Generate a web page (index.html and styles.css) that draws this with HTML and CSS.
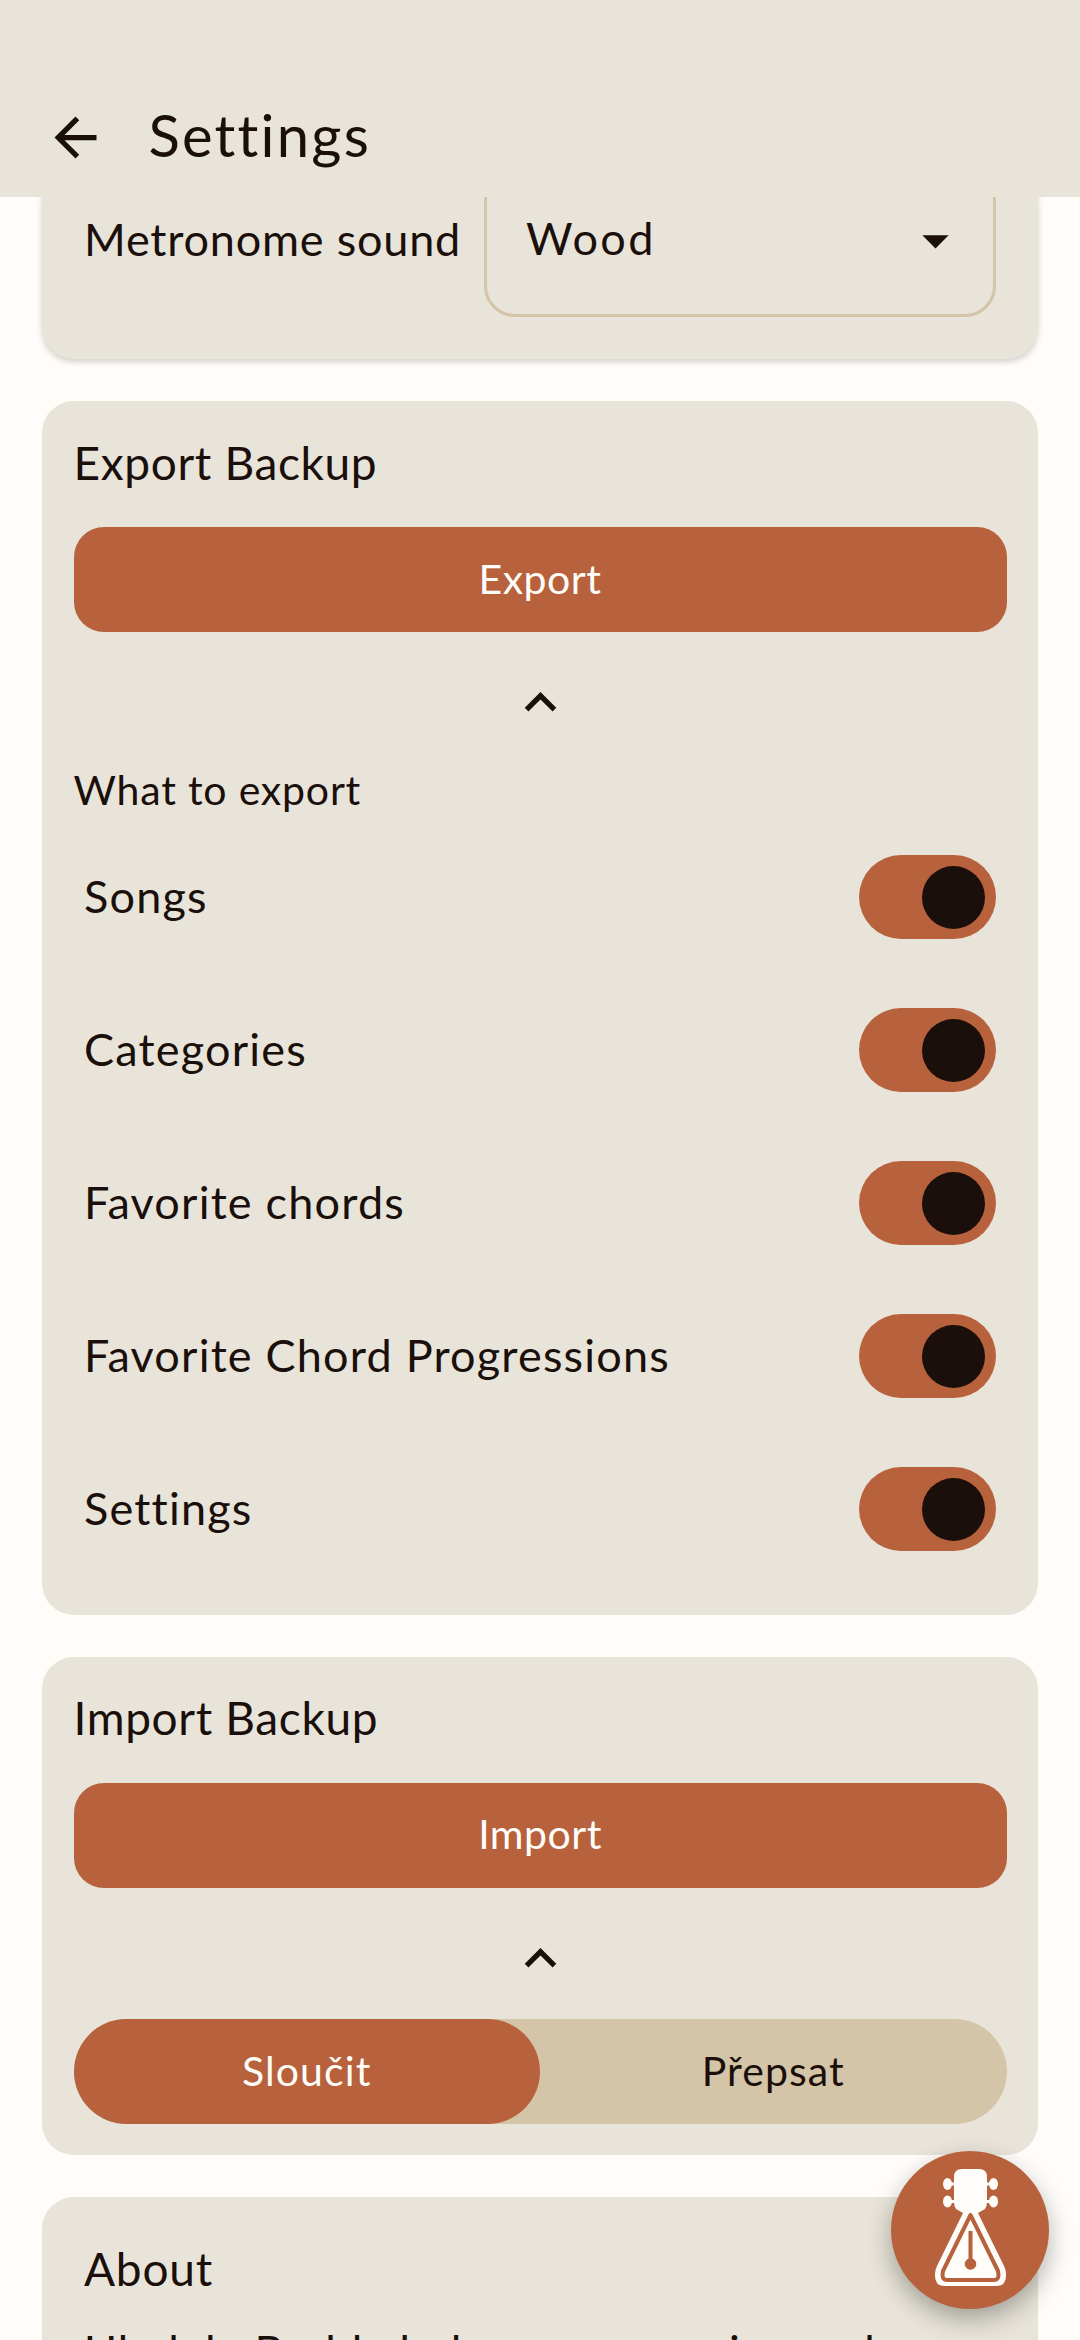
FILE: index.html
```html
<!DOCTYPE html>
<html lang="en">
<head>
<meta charset="utf-8">
<title>Settings</title>
<link rel="stylesheet" href="styles.css">
</head>
<body>
<div class="app">
  <header class="topbar">
    <svg class="back" viewBox="0 0 24 24"><path d="M20 11H7.83l5.59-5.59L12 4l-8 8 8 8 1.41-1.41L7.83 13H20v-2z"/></svg>
    <h1 class="page-title">Settings</h1>
  </header>
  <main class="scroller">
    <section class="card card-sound">
      <span class="label label-sound">Metronome sound</span>
      <div class="select">
        <span class="label select-value">Wood</span>
        <svg class="drop" viewBox="0 0 24 24"><path d="M7 10l5 5 5-5z"/></svg>
      </div>
    </section>

    <section class="card card-export">
      <h2 class="card-title">Export Backup</h2>
      <div class="btn">Export</div>
      <svg class="chevron" viewBox="0 0 24 24"><path d="M12 8l-6 6 1.41 1.41L12 10.83l4.59 4.58L18 14z"/></svg>
      <p class="subtitle">What to export</p>
      <div class="row"><span class="label">Songs</span><span class="switch"><i class="thumb"></i></span></div>
      <div class="row"><span class="label">Categories</span><span class="switch"><i class="thumb"></i></span></div>
      <div class="row"><span class="label">Favorite chords</span><span class="switch"><i class="thumb"></i></span></div>
      <div class="row"><span class="label">Favorite Chord Progressions</span><span class="switch"><i class="thumb"></i></span></div>
      <div class="row"><span class="label">Settings</span><span class="switch"><i class="thumb"></i></span></div>
    </section>

    <section class="card">
      <h2 class="card-title">Import Backup</h2>
      <div class="btn">Import</div>
      <svg class="chevron" viewBox="0 0 24 24"><path d="M12 8l-6 6 1.41 1.41L12 10.83l4.59 4.58L18 14z"/></svg>
      <div class="segmented">
        <div class="seg seg-on">Sloučit</div>
        <div class="seg">Přepsat</div>
      </div>
    </section>

    <section class="card card-about">
      <h2 class="about-title">About</h2>
      <p class="about-text">Ukulele Buddy helps you organize and learn songs.</p>
    </section>
  </main>
  <div class="fab">
    <svg class="fab-icon" viewBox="891 2151 158 158">
      <path class="w" d="M962 2169H979Q987 2169 987 2177V2202Q987 2206 985 2209L978 2213L1004 2266Q1006 2270 1006 2274V2276Q1006 2286 996 2286H945Q935 2286 935 2276V2274Q935 2270 937 2266L963 2213L956 2209Q954 2206 954 2202V2177Q954 2169 962 2169Z"/>
      <ellipse class="w" cx="947.5" cy="2184" rx="4.5" ry="6"/>
      <ellipse class="w" cx="947.5" cy="2201.5" rx="4.5" ry="6"/>
      <ellipse class="w" cx="993.5" cy="2184" rx="4.5" ry="6"/>
      <ellipse class="w" cx="993.5" cy="2201.5" rx="4.5" ry="6"/>
      <rect class="w" x="948" y="2182.5" width="45" height="3"/>
      <rect class="w" x="948" y="2200" width="45" height="3"/>
      <path class="tri" d="M970.5 2215L998 2271Q1000 2280 994 2280H947Q941 2280 943 2271Z"/>
      <rect class="b" x="968.5" y="2231" width="4" height="32"/>
      <circle class="b" cx="970.5" cy="2264" r="5.8"/>
    </svg>
  </div>
</div>
</body>
</html>
```
FILE: styles.css
```css
* { box-sizing: border-box; }
html, body { margin: 0; padding: 0; }
body {
  width: 1080px;
  height: 2340px;
  overflow: hidden;
  background: #FEFDF9;
  color: #1A0F0A;
  font-family: Lato, "Noto Sans", sans-serif;
}
.app { position: relative; display: flex; flex-direction: column; height: 2340px; overflow: hidden; }
.topbar {
  flex: none;
  height: 197px;
  background: #E8E4D9;
  display: flex;
  align-items: center;
  padding: 78px 0 0 43.5px;
  gap: 42px;
  position: relative;
  z-index: 2;
}
.back { width: 63px; height: 63px; fill: #1A0F0A; flex: none; }
.page-title { margin: 0; padding-bottom: 6px; font-size: 58px; font-weight: 400; letter-spacing: 2.2px; line-height: 70px; }
.scroller { flex: 1; min-height: 0; overflow: hidden; padding: 0 42px; display: flex; flex-direction: column; gap: 42px; }
.card { flex: none; background: #E8E4D9; border-radius: 32px; padding: 31.5px; display: flex; flex-direction: column; }
.card-sound {
  margin-top: -27px;
  padding: 0 42px 42px 42px;
  flex-direction: row;
  align-items: center;
  justify-content: space-between;
  box-shadow: 0 3px 6px rgba(0,0,0,.18);
}
.label { font-size: 45px; letter-spacing: 1.2px; line-height: 60px; padding-bottom: 3px; white-space: nowrap; }
.label-sound { letter-spacing: .8px; margin-top: -7px; }
.select-value { padding-bottom: 6px; letter-spacing: 2.4px; }
.select {
  width: 512px;
  height: 147px;
  border: 3px solid #D4C4A8;
  border-radius: 31px;
  display: flex;
  align-items: center;
  justify-content: space-between;
  padding: 0 26px 6px 39px;
}
.drop { width: 63px; height: 63px; fill: #1A0F0A; flex: none; }
.card-title { margin: 0 0 35.5px; font-size: 46px; font-weight: 400; letter-spacing: .65px; line-height: 59px; }
.btn {
  height: 105px;
  padding-bottom: 3px;
  background: #B8613D;
  color: #FEFDF9;
  border-radius: 30px;
  display: flex;
  align-items: center;
  justify-content: center;
  font-size: 41px;
  letter-spacing: .5px;
}
.chevron { display: block; width: 63px; height: 63px; fill: #1A0F0A; align-self: center; margin: 39px 0 0; flex: none; }
.subtitle { margin: 28px 0 3.5px; font-size: 41px; letter-spacing: .8px; line-height: 55px; }
.row { height: 153px; padding: 0 10.5px; display: flex; align-items: center; justify-content: space-between; }
.card-export { padding-bottom: 29px; }
.switch { width: 137px; height: 84px; border-radius: 42px; background: #B8613D; display: flex; align-items: center; justify-content: flex-end; padding-right: 11px; flex: none; }
.thumb { display: block; width: 63px; height: 63px; border-radius: 50%; background: #1A0F0A; }
.segmented { margin-top: 29px; height: 105px; background: #D4C4A8; border-radius: 52.5px; display: flex; }
.seg { flex: 1; display: flex; align-items: center; justify-content: center; padding-bottom: 2px; border-radius: 52.5px; font-size: 41px; letter-spacing: 1.1px; }
.seg-on { background: #B8613D; color: #FEFDF9; }
.card-about { padding: 42px; }
.about-title { margin: 0; font-size: 46px; font-weight: 400; letter-spacing: .8px; line-height: 60px; }
.about-text { margin: 22px 0 0; font-size: 45px; letter-spacing: 1.2px; line-height: 60px; width: 860px; }
.fab {
  position: absolute;
  left: 891px;
  top: 2151px;
  width: 158px;
  height: 158px;
  border-radius: 50%;
  background: #B8613D;
  box-shadow: 0 10px 24px rgba(0,0,0,.3);
  z-index: 3;
}
.fab-icon { display: block; width: 158px; height: 158px; }
.w { fill: #FEFDF9; }
.b { fill: #B8613D; }
.tri { fill: #FEFDF9; stroke: #B8613D; stroke-width: 4; stroke-linejoin: round; }
```
